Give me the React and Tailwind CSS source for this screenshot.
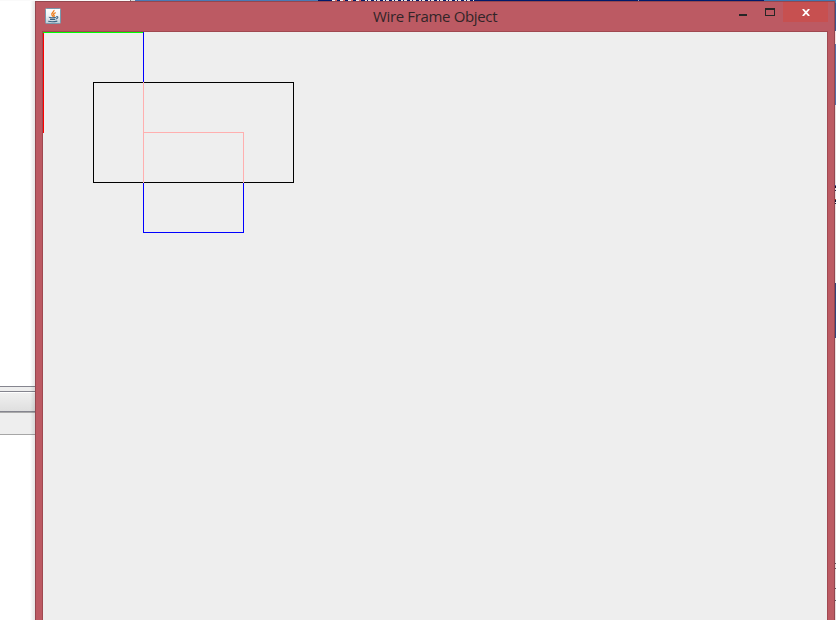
const topStrip = [
  ['w-[130px] bg-[#fafafa]'], ['w-px bg-[#777]'], ['w-1 bg-[#ddd]'], ['w-[183px] bg-[#4a7ab5]'], ['w-[14px] bg-[#001a6b]'],
];

function TopStrip() {
  return (
    <div className="flex h-px w-[836px] shrink-0 overflow-hidden">
      {topStrip.map(([c], i) => <i key={i} className={`shrink-0 ${c}`} />)}
      <i className="w-[30px] shrink-0 bg-[repeating-linear-gradient(90deg,#eee_0_3px,#e06b63_3px_5px,#001a6b_5px_8px)]" />
      <i className="w-[112px] shrink-0 bg-[repeating-linear-gradient(90deg,#001a6b_0_3px,#e8e8e8_3px_5px,#001a6b_5px_6px,#e8e8e8_6px_9px)]" />
      <i className="w-[164px] shrink-0 bg-[#001a6b]" />
      <i className="w-px shrink-0 bg-[#8795bb]" />
      <i className="w-[125px] shrink-0 bg-[#001a6b]" />
      <i className="grow bg-[#4178b0]" />
    </div>
  );
}

function LeftPage() {
  return (
    <div className="relative flex w-[35px] shrink-0 flex-col bg-white">
      <div className="h-[385px] shrink-0" />
      <div className="h-px bg-[#85858f]" />
      <div className="h-1 bg-[#eeeeee]" />
      <div className="h-px bg-[#85858f]" />
      <div className="h-px bg-white" />
      <div className="h-[18px] bg-gradient-to-b from-[#f0f0f0] to-[#dfdfdf]" />
      <div className="h-px bg-[#85858f]" />
      <div className="h-px bg-[#aaaaaa]" />
      <div className="h-[21px] bg-[#eeeeee]" />
      <div className="h-px bg-[#a6a6a6]" />
      <div className="absolute inset-y-0 right-0 w-[5px] bg-gradient-to-r from-transparent to-black/10" />
    </div>
  );
}

function RightPage() {
  return (
    <div className="flex w-px shrink-0 flex-col bg-[#e6dede]">
      <i className="h-[2px] bg-[#4178b0]" />
      <i className="h-[28px] bg-[#3b5590]" />
      <i className="h-[13px] bg-[#f3dede]" />
      <i className="h-[61px] bg-[#5470a8]" />
      <i className="h-[80px]" />
      <i className="h-px bg-[#5168b0]" />
      <i className="h-[2px] bg-[#101030]" />
      <i className="h-[2px]" />
      <i className="h-px bg-[#222244]" />
      <i className="h-[8px]" />
      <i className="h-px bg-[#a03a30]" />
      <i className="h-[2px] bg-[#101030]" />
      <i className="h-px" />
      <i className="h-px bg-[#222244]" />
      <i className="h-[79px]" />
      <i className="h-[55px] bg-[#33457c]" />
      <i className="h-[225px]" />
      <i className="h-px bg-[#5b5560]" />
      <i className="h-[4px]" />
      <i className="h-px bg-[#5b5560]" />
      <i className="h-[19px]" />
      <i className="h-px bg-[#5b5560]" />
      <i className="h-[11px]" />
      <i className="h-px bg-[#5b5560]" />
    </div>
  );
}

function JavaIcon() {
  return (
    <svg width="16" height="16" viewBox="0 0 16 16">
      <defs>
        <linearGradient id="tile" x2="0" y2="1">
          <stop stopColor="#fff" /><stop offset=".5" stopColor="#eef2f4" /><stop offset="1" stopColor="#bccbd6" />
        </linearGradient>
      </defs>
      <rect x=".5" y=".5" width="15" height="15" rx="1" fill="url(#tile)" stroke="#7898ac" />
      <path d="M9 2C9.5 4 5.5 5 7 7.2L8.2 8.7M10.7 4.6C8 5.7 8.2 6.4 9.2 7.5L8.9 9" fill="none" stroke="#ee7d1b" strokeWidth="1.3" />
      <path d="M4.2 8.8Q4 9.8 7.5 9.7T11 9.2M11.2 8.7C13.5 8 13.5 10.3 11 11M5 11.4H10.3M3.2 13.3Q7.5 14.3 12.3 13.1" fill="none" stroke="#3e6482" strokeWidth="1.1" />
    </svg>
  );
}

function TitleBar() {
  return (
    <div className="flex h-[29px] w-full shrink-0 items-start">
      <div className="ml-[9px] mt-[6px]"><JavaIcon /></div>
      <div className="ml-[312px] mt-[3px] w-[126px] whitespace-nowrap font-['Open_Sans','Noto_Sans',sans-serif] text-[15px] leading-[22px] tracking-[-0.35px] text-[#322528]">
        Wire Frame Object
      </div>
      <div className="ml-[240px] mt-[12px] h-[2px] w-[8px] bg-[#262626]" />
      <div className="ml-[18px] mt-[6px] h-[8px] w-[10px] border border-t-2 border-[#262626]" />
      <div className="ml-[8px] flex h-[20px] w-[45px] justify-center bg-[#c75050] pt-[7px]">
        <svg width="8" height="7" viewBox="0 0 8 7">
          <path d="M.8 0L7.2 7M7.2 0L.8 7" stroke="#fff" strokeWidth="1.8" />
        </svg>
      </div>
    </div>
  );
}

function WireFrame() {
  return (
    <svg width="784" height="588" viewBox="0 0 784 588" className="block" shapeRendering="crispEdges" fill="none">
      <path d="M.5 0V101" stroke="#ff0000" />
      <path d="M0 .5H100" stroke="#00ff00" />
      <path d="M100.5 0V200.5H200.5V151" stroke="#0000ff" />
      <rect x="50.5" y="50.5" width="200" height="100" stroke="#000" />
      <path d="M100.5 50V151M100 100.5H200.5V151" stroke="#ffafaf" />
    </svg>
  );
}

export default function App() {
  return (
    <div className="flex h-[620px] w-[836px] flex-col overflow-hidden bg-white">
      <TopStrip />
      <div className="flex h-[619px]">
        <LeftPage />
        <div className="flex w-[800px] shrink-0 flex-col border-x border-t border-[#94474f] bg-[#bc5a63]">
          <TitleBar />
          <div className="ml-[6px] w-[786px] border border-b-0 border-[#a04850] bg-[#eeeeee]">
            <WireFrame />
          </div>
        </div>
        <RightPage />
      </div>
    </div>
  );
}
